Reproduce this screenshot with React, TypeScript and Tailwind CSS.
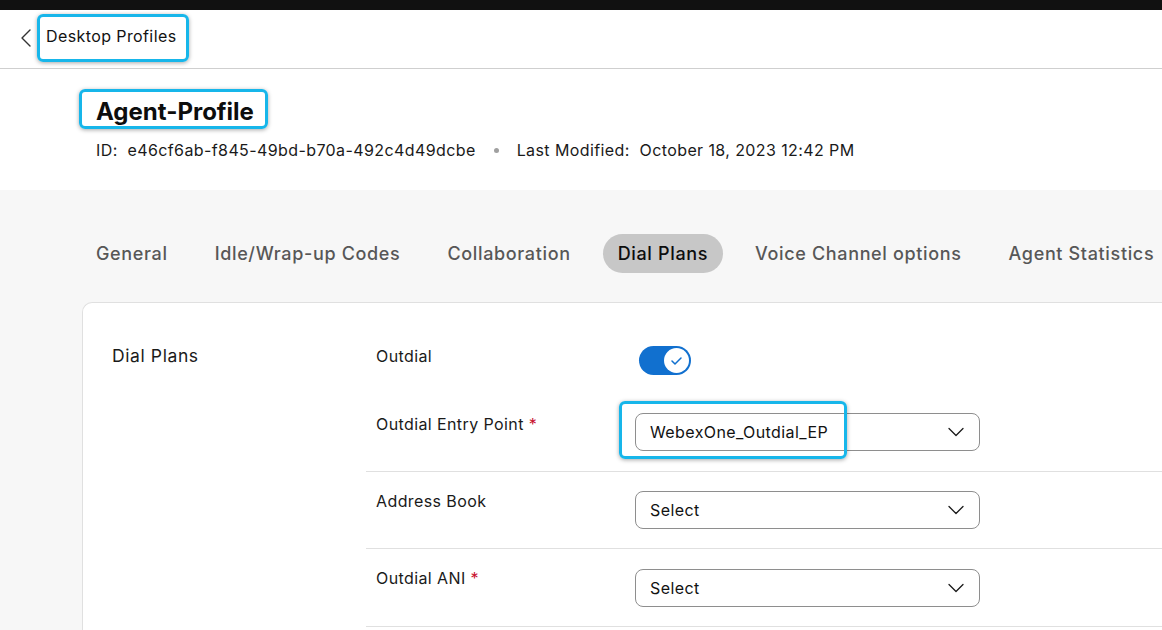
import React from "react";

const Chevron = () => (
  <svg width="16" height="10" viewBox="0 0 16 10" fill="none">
    <path d="M1 1.5L8 8.5L15 1.5" stroke="#1a1a1a" strokeWidth="1.3" strokeLinecap="round" strokeLinejoin="round" />
  </svg>
);

const SelectBox = ({ value, children }: { value: string; children?: React.ReactNode }) => (
  <div className="relative">
    <div className="w-[345px] h-[38px] border border-[#8e8e8e] rounded-[8px] bg-white flex items-center justify-between pl-[14px] pr-[15px]">
      <span className="text-[16px] text-[#121212] tracking-[0.4px]">{value}</span>
      <Chevron />
    </div>
    {children}
  </div>
);

const Hl = "border-[3px] border-[#17b6ea] rounded-[6px] shadow-[0_1px_4px_rgba(0,0,0,0.35)]";

export default function App() {
  const tabs = ["General", "Idle/Wrap-up Codes", "Collaboration", "Dial Plans", "Voice Channel options", "Agent Statistics"];
  return (
    <div className="w-[1162px] h-[630px] overflow-hidden bg-white flex flex-col tracking-[0.4px]" style={{ fontFamily: "Inter, 'Noto Sans', sans-serif" }}>
      <div className="h-[10px] bg-[#111111] shrink-0" />
      <div className="h-[59px] border-b border-[#cfcfcf] flex items-center shrink-0">
        <svg className="ml-[19px] mt-[-3px]" width="14" height="18" viewBox="0 0 14 18" fill="none">
          <path d="M11 1L3 9L11 17" stroke="#333" strokeWidth="1.4" strokeLinecap="round" strokeLinejoin="round" />
        </svg>
        <div className={`ml-[4px] mt-[-2px] w-[152px] h-[48px] flex items-center pl-[6px] pb-[4px] ${Hl}`}>
          <span className="text-[16px] text-[#121212]">Desktop Profiles</span>
        </div>
      </div>
      <div className="bg-white shrink-0 pt-[20px] pb-[28px]">
        <div className={`ml-[79px] w-[189px] h-[40px] flex items-center pl-[14px] pt-[5px] ${Hl}`}>
          <span className="text-[24px] font-bold text-[#0d0d0d] tracking-[0px]">Agent-Profile</span>
        </div>
        <div className="ml-[96px] mt-[9px] flex items-center text-[16px] leading-6 text-[#1a1a1a]">
          <span className="whitespace-pre">ID:  e46cf6ab-f845-49bd-b70a-492c4d49dcbe</span>
          <span className="mx-[18px] w-[5px] h-[5px] rounded-full bg-[#a0a0a0]" />
          <span className="whitespace-pre">Last Modified:  October 18, 2023 12:42 PM</span>
        </div>
      </div>
      <div className="flex-1 bg-[#f7f7f7] flex flex-col">
        <div className="mt-[44px] ml-[81px] flex gap-[17px] h-[39px] shrink-0">
          {tabs.map((t) => (
            <div
              key={t}
              className={`px-[15px] h-[39px] flex items-center rounded-full text-[18px] font-medium whitespace-nowrap tracking-[0.65px] ${
                t === "Dial Plans" ? "bg-[#c7c7c7] text-[#0d0d0d]" : "text-[#575757]"
              }`}
            >
              {t}
            </div>
          ))}
        </div>
        <div className="mt-[29px] ml-[82px] -mr-[20px] flex-1 bg-white border-t border-l border-[#e0e0e0] rounded-tl-[10px] flex">
          <div className="w-[283px] pl-[29px] pt-[41px] shrink-0">
            <span className="text-[17.5px] leading-6 text-[#1a1a1a] tracking-[0.6px]">Dial Plans</span>
          </div>
          <div className="flex-1 flex flex-col">
            <div className="h-[97px] pl-[10px] pt-[41px] flex">
              <div className="w-[263px] text-[16px] leading-6 text-[#1a1a1a]">Outdial</div>
              <div className="mt-[2px] w-[52px] h-[29px] rounded-full bg-[#1170cf] flex items-center justify-end pr-[2px]">
                <div className="w-[25px] h-[25px] rounded-full bg-white flex items-center justify-center">
                  <svg width="11" height="8" viewBox="0 0 11 8" fill="none">
                    <path d="M1 4L4 7L10 1" stroke="#1170cf" strokeWidth="1.5" strokeLinecap="round" strokeLinejoin="round" />
                  </svg>
                </div>
              </div>
            </div>
            <div className="pl-[10px] pt-[12px] pb-[20px] border-b border-[#e0e0e0] flex">
              <div className="w-[259px] text-[16px] leading-6 text-[#1a1a1a]">
                Outdial Entry Point <span className="text-[#c8102e]">*</span>
              </div>
              <div className="mt-[1px]">
                <SelectBox value="WebexOne_Outdial_EP">
                  <div className={`absolute left-[-16px] top-[-12px] w-[228px] h-[58px] ${Hl}`} />
                </SelectBox>
              </div>
            </div>
            <div className="pl-[10px] pt-[17px] pb-[19px] border-b border-[#e0e0e0] flex">
              <div className="w-[259px] text-[16px] leading-6 text-[#1a1a1a]">Address Book</div>
              <div className="mt-[2px]">
                <SelectBox value="Select" />
              </div>
            </div>
            <div className="pl-[10px] pt-[17px] pb-[19px] border-b border-[#e0e0e0] flex">
              <div className="w-[259px] text-[16px] leading-6 text-[#1a1a1a]">
                Outdial ANI <span className="text-[#c8102e]">*</span>
              </div>
              <div className="mt-[3px]">
                <SelectBox value="Select" />
              </div>
            </div>
          </div>
        </div>
      </div>
    </div>
  );
}
